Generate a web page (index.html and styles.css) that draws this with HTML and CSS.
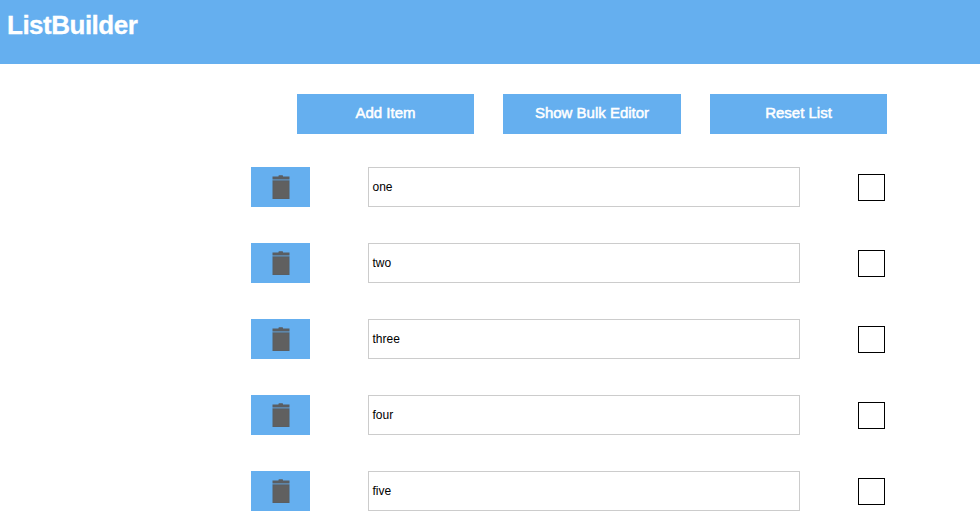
FILE: index.html
```html
<!DOCTYPE html>
<html lang="en">
<head>
<meta charset="utf-8">
<title>ListBuilder</title>
<link rel="stylesheet" href="styles.css">
</head>
<body>
<svg width="0" height="0" class="defs"><symbol id="trash" viewBox="0 0 18 24"><path d="M6.500 1.500V.8Q6.500 .2 7.200 .2h3.100q.7 0 .7.600v.700h6.500v2.500H.5V1.500z"/><path d="M.5 4h17v1.400H.5z" opacity=".5"/><path d="M.5 5.400h17V24H.5z"/><path d="M1.500 6.500h15V23h-15z" class="inset"/></symbol></svg>
<header class="header"><h1>ListBuilder</h1></header>
<nav class="actions">
<button>Add Item</button><button>Show Bulk Editor</button><button>Reset List</button>
</nav>
<main class="list">
<div class="row"><button class="del"><svg><use href="#trash"/></svg></button><div class="field">one</div><span class="check"></span></div>
<div class="row"><button class="del"><svg><use href="#trash"/></svg></button><div class="field">two</div><span class="check"></span></div>
<div class="row"><button class="del"><svg><use href="#trash"/></svg></button><div class="field">three</div><span class="check"></span></div>
<div class="row"><button class="del"><svg><use href="#trash"/></svg></button><div class="field">four</div><span class="check"></span></div>
<div class="row"><button class="del"><svg><use href="#trash"/></svg></button><div class="field">five</div><span class="check"></span></div>
</main>
</body>
</html>
```
FILE: styles.css
```css
* { box-sizing: border-box; }
body { margin: 0; background: #fff; font-family: "Liberation Sans", Arial, sans-serif; overflow: hidden; }
.defs { display: none; }
.header { height: 64px; padding: 10px 7px; background: #65afef; color: #fff; }
h1 { margin: 0; font-size: 26px; line-height: 30px; letter-spacing: -0.5px; -webkit-text-stroke: 0.3px #fff; }
button { border: 0; padding: 0; background: #65afef; font-family: inherit; }
.actions { display: grid; grid-template-columns: 177px 178px 177px; gap: 29px; margin: 30px 0 0 297px; }
.actions button { height: 40px; padding-bottom: 4px; color: #fff; font-size: 15px; -webkit-text-stroke: 0.5px #fff; }
.list { display: grid; gap: 36px; margin: 33px 0 0 251px; }
.row { display: flex; align-items: center; height: 40px; }
.del { width: 59px; height: 40px; display: flex; align-items: center; justify-content: center; }
.del svg { width: 18px; height: 24px; fill: #5a5e62; }
.inset { fill: #606060; }
.field { width: 432px; height: 40px; margin-left: 58px; padding-left: 3.5px; border: 1px solid #ccc; font-size: 12px; line-height: 38px; color: #000; }
.check { width: 27px; height: 27px; margin-left: 58px; border: 1px solid #000; }
```
